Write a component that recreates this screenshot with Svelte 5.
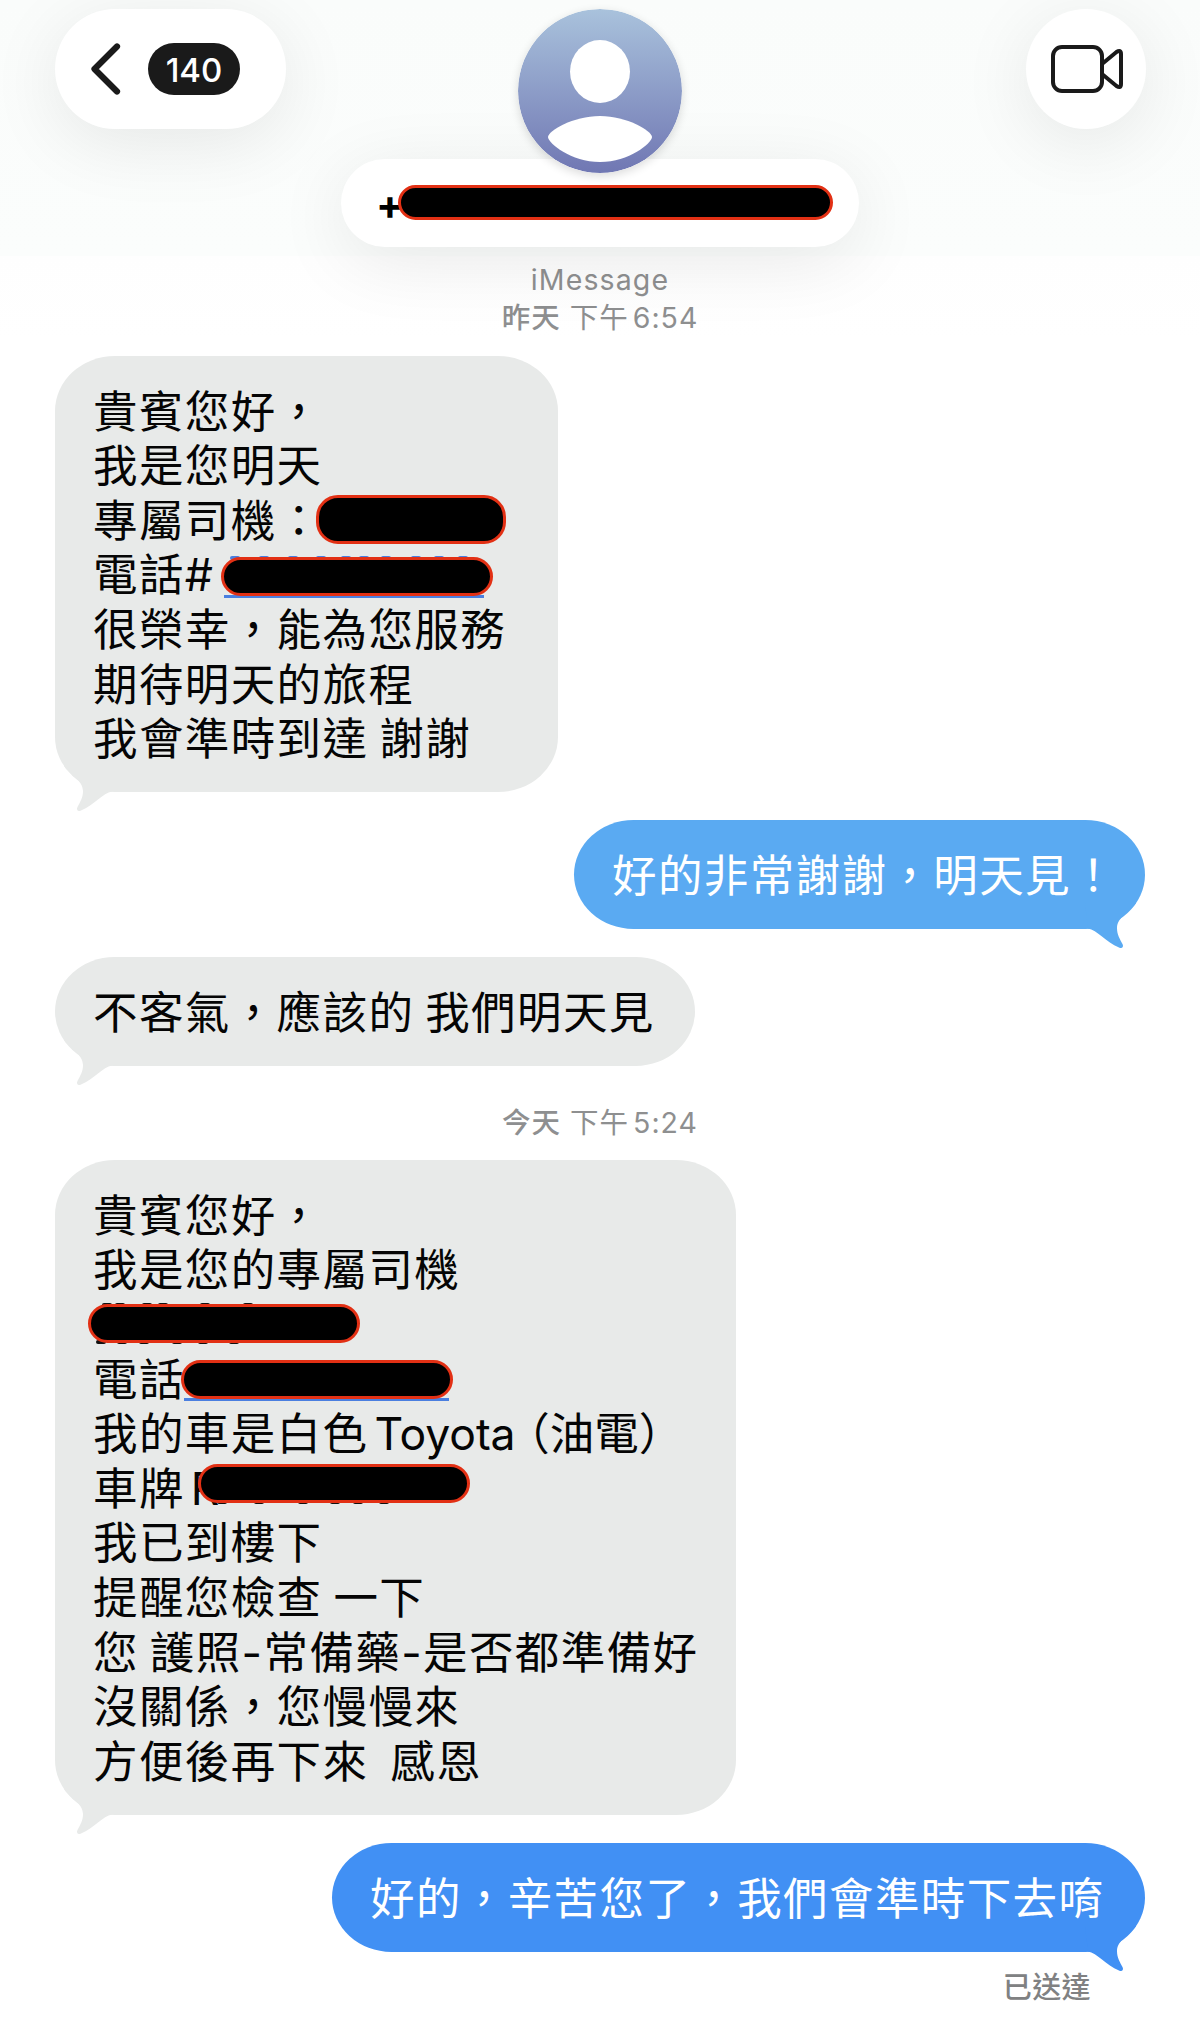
<script lang="ts">
	type Mark = { left: number; top: number; width: number; height: number };
	type Line = {
		text: string;
		latin?: string;
		note?: string;
		mark?: Mark;
		link?: { left: number; width: number };
		bits?: number[];
		bitsEnd?: number[];
		blue?: boolean;
	};

	const unread = 140;

	const first: Line[] = [
		{ text: '貴賓您好，' },
		{ text: '我是您明天' },
		{ text: '專屬司機：', mark: { left: 223, top: 1, width: 190, height: 49 } },
		{
			text: '電話#',
			mark: { left: 128, top: 9, width: 272, height: 39 },
			link: { left: 131, width: 260 },
			bits: [137, 166, 195, 223, 248, 266, 288, 318, 341, 365],
			blue: true
		},
		{ text: '很榮幸，能為您服務' },
		{ text: '期待明天的旅程' },
		{ text: '我會準時到達 謝謝' }
	];

	const second: Line[] = [
		{ text: '貴賓您好，' },
		{ text: '我是您的專屬司機' },
		{
			text: '',
			mark: { left: -5, top: 6, width: 272, height: 39 },
			bits: [9, 22, 49, 65, 107, 150],
			bitsEnd: [3, 24, 46, 79, 105, 136]
		},
		{
			text: '電話',
			mark: { left: 88, top: 7, width: 272, height: 39 },
			link: { left: 91, width: 265 }
		},
		{ text: '我的車是白色', latin: 'Toyota', note: '（油電）' },
		{
			text: '車牌',
			latin: 'R',
			mark: { left: 105, top: 2, width: 272, height: 39 },
			bitsEnd: [124, 161, 205, 237, 260, 286]
		},
		{ text: '我已到樓下' },
		{ text: '提醒您檢查 一下' },
		{ text: '您 護照-常備藥-是否都準備好' },
		{ text: '沒關係，您慢慢來' },
		{ text: '方便後再下來  感恩' }
	];
</script>

{#snippet bubble(kind: string, width: number, lines: Line[])}
	<div class="bubble bubble--{kind}" style:width="{width}px">
		{#each lines as line}
			<p class="line">
				<span>{line.text}</span>{#if line.latin}<span class="latin">{line.latin}</span>{/if}{#if line.note}<span class="note">{line.note}</span>{/if}
				{#if line.mark}
					{#each line.bits ?? [] as bit}
						<i class="bit" class:bit--blue={line.blue} style:left="{bit}px" style:top="{line.mark.top - 1}px"></i>
					{/each}
					{#each line.bitsEnd ?? [] as bit}
						<i class="bit" style:left="{bit}px" style:top="{line.mark.top + line.mark.height - 3}px"></i>
					{/each}
					{#if line.link}
						<i
							class="link"
							style:left="{line.link.left}px"
							style:top="{line.mark.top + line.mark.height - 1}px"
							style:width="{line.link.width}px"
						></i>
					{/if}
					<i
						class="mark"
						style:left="{line.mark.left}px"
						style:top="{line.mark.top}px"
						style:width="{line.mark.width}px"
						style:height="{line.mark.height}px"
					></i>
				{/if}
			</p>
		{/each}
		<svg class="tail" width="62" height="46" viewBox="0 0 62 46">
			<path d="M9 0 C14 8 28 14 28 25 C28 32 25 36 22.5 41 C21 44 23 46 26 44.5 C39 39 48 27 57 25.5 L60 0 Z" />
		</svg>
	</div>
{/snippet}

<div class="screen" lang="zh-TW">
	<header class="header">
		<button class="back" type="button" aria-label="返回">
			<svg width="32" height="54" viewBox="0 0 32 54">
				<path d="M27 4.5 L4.5 27 L27 49.5" fill="none" stroke="#1a1a1a" stroke-width="6.2" stroke-linecap="round" stroke-linejoin="round" />
			</svg>
			<span class="back__count">{unread}</span>
		</button>

		<div class="contact">
			<svg class="contact__avatar" width="164" height="164" viewBox="0 0 164 164">
				<defs>
					<linearGradient id="avatar" x1="0" y1="0" x2="0" y2="1">
						<stop offset="0" stop-color="#a9c2dc" />
						<stop offset="1" stop-color="#7077b3" />
					</linearGradient>
				</defs>
				<circle cx="82" cy="82" r="82" fill="url(#avatar)" />
				<ellipse cx="82" cy="62.5" rx="30" ry="31.5" fill="#fff" />
				<path d="M82 107 C109 107 134 122 134 128 C134 134 111 153 82 153 C53 153 30 134 30 128 C30 122 55 107 82 107 Z" fill="#fff" />
			</svg>
			<div class="contact__name">
				<span>+</span>
				<i class="mark contact__mark"></i>
			</div>
		</div>

		<button class="video" type="button" aria-label="視訊">
			<svg width="76" height="52" viewBox="0 0 76 52">
				<g fill="none" stroke="#1a1a1a" stroke-width="4" stroke-linejoin="round">
					<rect x="4" y="4" width="49" height="44" rx="9" />
					<path d="M53 21 L67.5 9 Q72 6 72 11 V41 Q72 46 67.5 43 L53 31" />
				</g>
			</svg>
		</button>
	</header>

	<main class="thread">
		<p class="stamp">
			<span class="stamp__service">iMessage</span>
			<span class="stamp__time"><b>昨天</b> 下午<span class="stamp__clock">6:54</span></span>
		</p>
		{@render bubble('in', 503, first)}
		{@render bubble('out', 571, [{ text: '好的非常謝謝，明天見！' }])}
		{@render bubble('in', 640, [{ text: '不客氣，應該的 我們明天見' }])}
		<p class="stamp stamp--today">
			<span class="stamp__time"><b>今天</b> 下午<span class="stamp__clock">5:24</span></span>
		</p>
		{@render bubble('in', 681, second)}
		{@render bubble('out bubble--deep', 813, [{ text: '好的，辛苦您了，我們會準時下去唷' }])}
		<p class="receipt">已送達</p>
	</main>
</div>

<style>
	:global(body) {
		background: #fff;
	}

	.screen {
		width: 1200px;
		height: 2018px;
		overflow: hidden;
		background: linear-gradient(180deg, #fafcfb 0, #fbfdfc 256px, #fefefe 256px, #fff 340px);
		font-family: Inter, 'Noto Sans CJK TC', sans-serif;
	}

	p {
		margin: 0;
	}

	button {
		border: 0;
		padding: 0;
		background: #fff;
		font: inherit;
	}

	.header {
		display: grid;
		grid-template-columns: 1fr auto 1fr;
		align-items: start;
		box-sizing: border-box;
		height: 256px;
		padding: 9px 54px 0;
	}

	.back,
	.video,
	.contact__name {
		background: #fff;
		box-shadow: 0 14px 72px rgba(0, 0, 0, 0.085);
	}

	.back {
		display: flex;
		align-items: center;
		gap: 26px;
		box-sizing: border-box;
		width: 231px;
		height: 120px;
		margin-left: 1px;
		padding-left: 35px;
		border-radius: 60px;
	}

	.back__count {
		width: 92px;
		height: 52px;
		border-radius: 26px;
		background: #1a1a1a;
		color: #fff;
		font-size: 33px;
		font-weight: 500;
		line-height: 54px;
		text-align: center;
	}

	.contact {
		display: flex;
		flex-direction: column;
		align-items: center;
	}

	.contact__avatar {
		position: relative;
		z-index: 1;
		border-radius: 50%;
		box-shadow: 0 3px 10px rgba(0, 0, 0, 0.14);
	}

	.contact__name {
		position: relative;
		box-sizing: border-box;
		width: 518px;
		height: 88px;
		margin-top: -14px;
		padding-left: 35px;
		border-radius: 44px;
		font-size: 41px;
		font-weight: 700;
		line-height: 91px;
	}

	.contact__mark {
		top: 26px;
		left: 57px;
		width: 435px;
		height: 35px;
	}

	.video {
		display: flex;
		align-items: center;
		justify-content: center;
		justify-self: end;
		box-sizing: border-box;
		width: 120px;
		height: 120px;
		padding-left: 2px;
		border-radius: 50%;
	}

	.mark {
		position: absolute;
		box-sizing: border-box;
		border: 3px solid #e23014;
		border-radius: 22px;
		background: #000;
	}

	.thread {
		display: flex;
		flex-direction: column;
		align-items: flex-start;
		padding: 0 55px;
	}

	.stamp {
		display: flex;
		flex-direction: column;
		align-items: center;
		align-self: center;
		box-sizing: border-box;
		height: 99.6px;
		padding-top: 5px;
		color: #8e8f90;
		font-size: 28.5px;
		line-height: 38px;
	}

	.stamp__service {
		letter-spacing: 1.1px;
	}

	.stamp__time {
		letter-spacing: 1px;
		white-space: pre;
	}

	.stamp b {
		font-weight: 500;
	}

	.stamp__clock {
		margin-left: 4px;
	}

	.stamp--today {
		height: 66.4px;
		padding-top: 10px;
	}

	/* Bubbles */
	.bubble {
		--fill: #e8eae9;
		position: relative;
		box-sizing: border-box;
		margin-bottom: 27.6px;
		padding: 29px 0 25.6px 38px;
		border-radius: 60px / 55px;
		background: var(--fill);
		color: #050505;
		font-size: 44.5px;
		line-height: 54.6px;
	}

	.bubble--out {
		--fill: #5aaaf2;
		align-self: flex-end;
		color: #fff;
	}

	.bubble--deep {
		--fill: #4190f4;
		margin-bottom: 0;
	}

	.line {
		position: relative;
		height: 54.6px;
		letter-spacing: 1.4px;
		word-spacing: -3px;
		white-space: pre;
	}

	.latin {
		margin-left: 6px;
		letter-spacing: -0.1px;
	}

	/* half-width brackets */
	.note {
		margin-left: 12px;
		font-feature-settings: 'halt';
		letter-spacing: 0;
	}

	.tail {
		position: absolute;
		bottom: -20px;
		left: 0;
		fill: var(--fill);
	}

	.bubble--out .tail {
		right: 0;
		left: auto;
		transform: scaleX(-1);
	}

	.link {
		position: absolute;
		height: 3px;
		background: #4a7fe0;
	}

	.bit {
		position: absolute;
		width: 10px;
		height: 4px;
		border-radius: 2px;
		background: #111;
	}

	.bit--blue {
		background: #4a7fe0;
	}

	.receipt {
		align-self: flex-end;
		margin: 17px 54px 0 0;
		color: #808182;
		font-size: 29px;
		font-weight: 500;
		letter-spacing: 0.4px;
		line-height: 38px;
	}
</style>
